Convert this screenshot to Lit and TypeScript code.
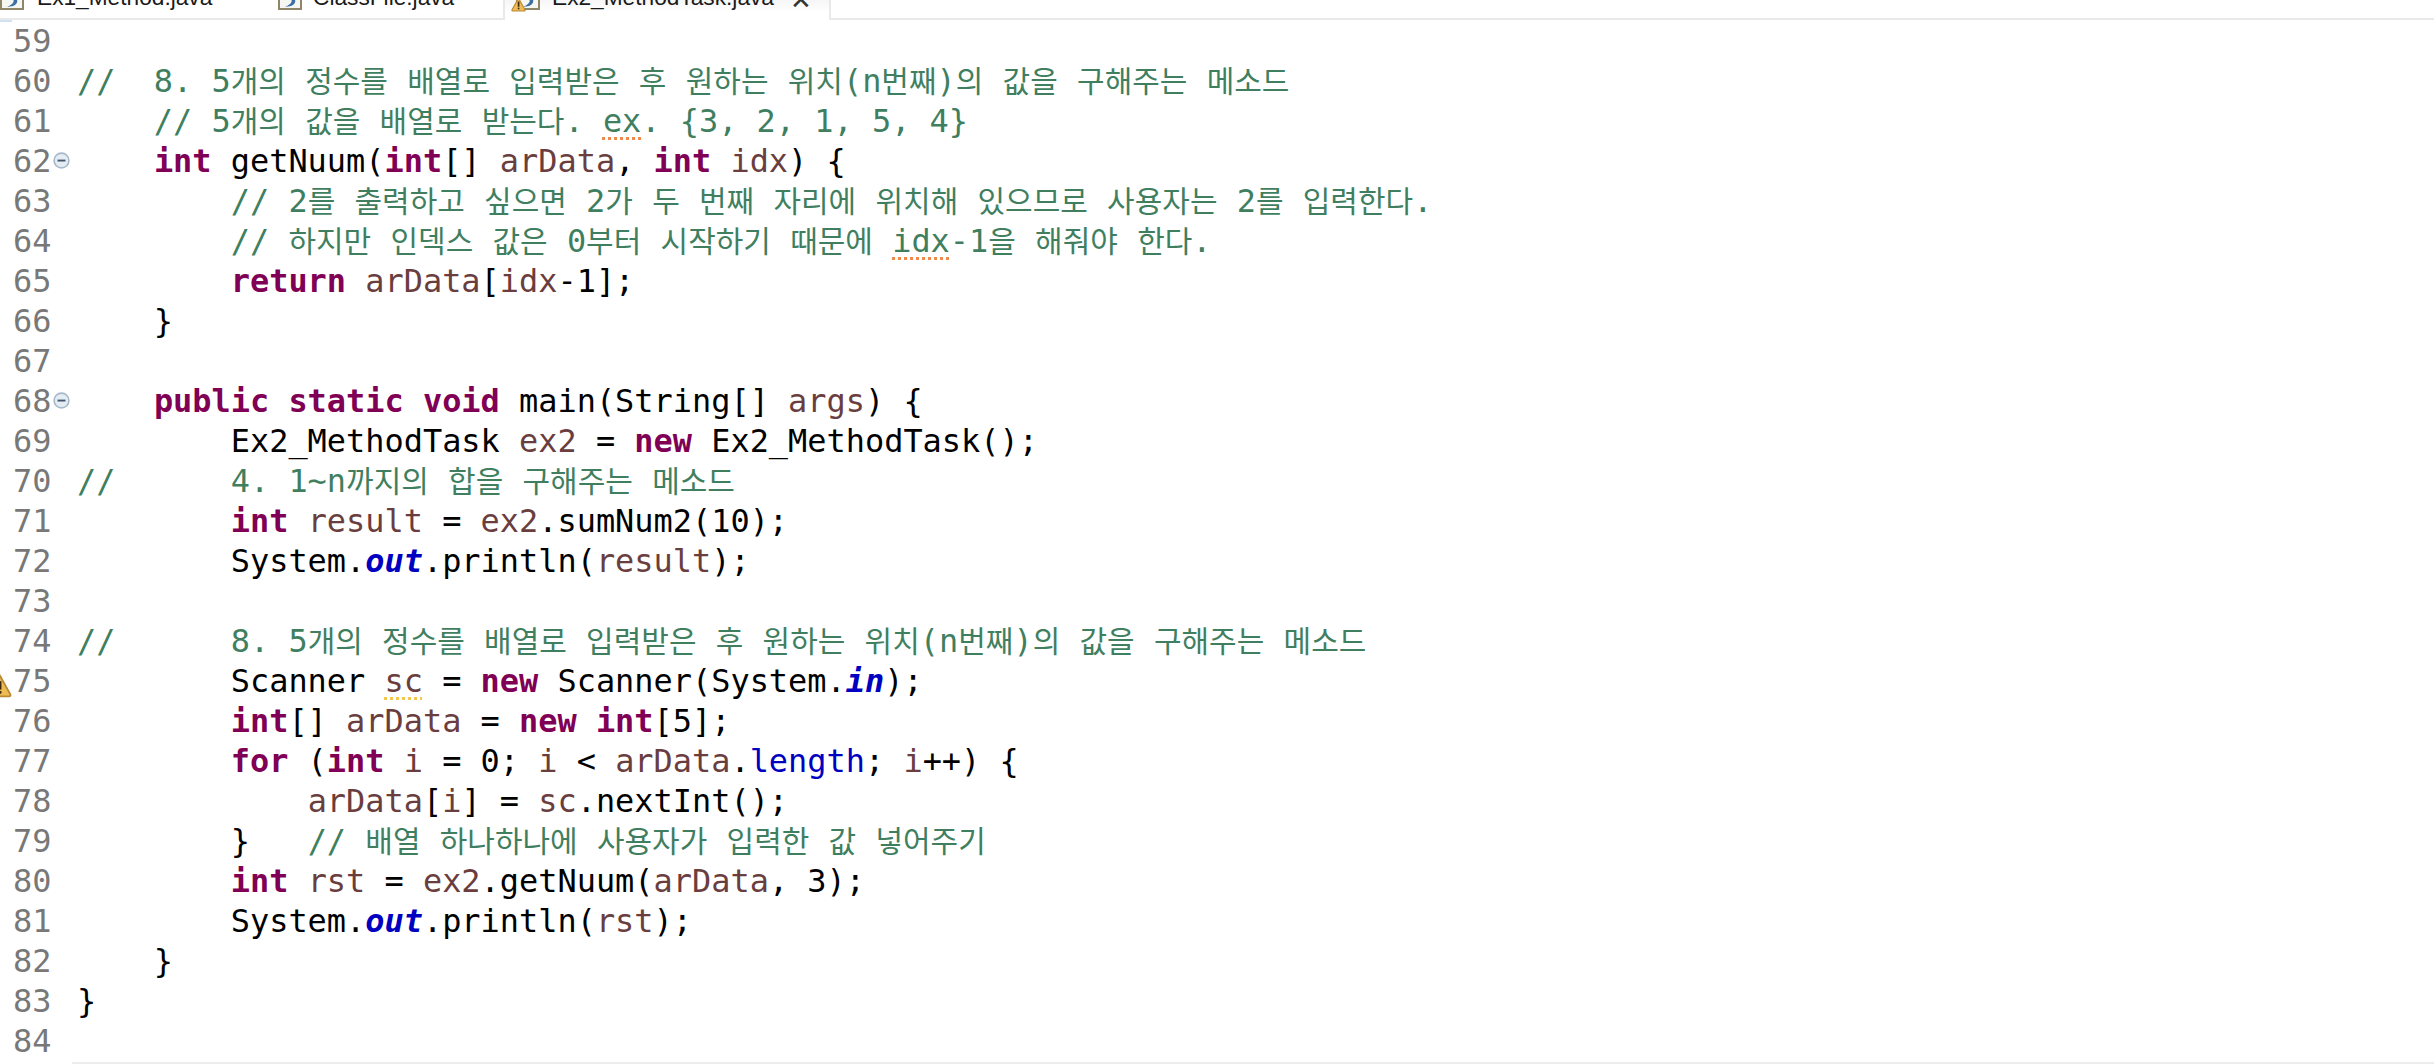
import { LitElement, html, css, svg } from "lit";
import { customElement } from "lit/decorators.js";

type Tok = [string, string?];
const C = "c", K = "k", V = "v", F = "f", L = "l", W = "w", S = "s";
const lines: { n: number; t: Tok[]; fold?: boolean; warn?: boolean }[] = [
  { n: 59, t: [] },
  { n: 60, t: [["//  8. 5개의 정수를 배열로 입력받은 후 원하는 위치(n번째)의 값을 구해주는 메소드", C]] },
  { n: 61, t: [["    // 5개의 값을 배열로 받는다. ", C], ["ex", S + " " + C], [". {3, 2, 1, 5, 4}", C]] },
  { n: 62, fold: true, t: [["    "], ["int", K], [" getNuum("], ["int", K], ["[] "], ["arData", V], [", "], ["int", K], [" "], ["idx", V], [") {"]] },
  { n: 63, t: [["        // 2를 출력하고 싶으면 2가 두 번째 자리에 위치해 있으므로 사용자는 2를 입력한다.", C]] },
  { n: 64, t: [["        // 하지만 인덱스 값은 0부터 시작하기 때문에 ", C], ["idx", S + " " + C], ["-1을 해줘야 한다.", C]] },
  { n: 65, t: [["        "], ["return", K], [" "], ["arData", V], ["["], ["idx", V], ["-1];"]] },
  { n: 66, t: [["    }"]] },
  { n: 67, t: [] },
  { n: 68, fold: true, t: [["    "], ["public", K], [" "], ["static", K], [" "], ["void", K], [" main(String[] "], ["args", V], [") {"]] },
  { n: 69, t: [["        Ex2_MethodTask "], ["ex2", V], [" = "], ["new", K], [" Ex2_MethodTask();"]] },
  { n: 70, t: [["//      4. 1~n까지의 합을 구해주는 메소드", C]] },
  { n: 71, t: [["        "], ["int", K], [" "], ["result", V], [" = "], ["ex2", V], [".sumNum2(10);"]] },
  { n: 72, t: [["        System."], ["out", F], [".println("], ["result", V], [");"]] },
  { n: 73, t: [] },
  { n: 74, t: [["//      8. 5개의 정수를 배열로 입력받은 후 원하는 위치(n번째)의 값을 구해주는 메소드", C]] },
  { n: 75, warn: true, t: [["        Scanner "], ["sc", V + " " + W], [" = "], ["new", K], [" Scanner(System."], ["in", F], [");"]] },
  { n: 76, t: [["        "], ["int", K], ["[] "], ["arData", V], [" = "], ["new", K], [" "], ["int", K], ["[5];"]] },
  { n: 77, t: [["        "], ["for", K], [" ("], ["int", K], [" "], ["i", V], [" = 0; "], ["i", V], [" < "], ["arData", V], ["."], ["length", L], ["; "], ["i", V], ["++) {"]] },
  { n: 78, t: [["            "], ["arData", V], ["["], ["i", V], ["] = "], ["sc", V], [".nextInt();"]] },
  { n: 79, t: [["        }   "], ["// 배열 하나하나에 사용자가 입력한 값 넣어주기", C]] },
  { n: 80, t: [["        "], ["int", K], [" "], ["rst", V], [" = "], ["ex2", V], [".getNuum("], ["arData", V], [", 3);"]] },
  { n: 81, t: [["        System."], ["out", F], [".println("], ["rst", V], [");"]] },
  { n: 82, t: [["    }"]] },
  { n: 83, t: [["}"]] },
  { n: 84, t: [] },
];

const fileIcon = svg`<svg width="25" height="10" viewBox="0 0 25 10"><rect x="1" y="-6" width="22" height="15" fill="#f6f6f2" stroke="#8f8668" stroke-width="2"/><path d="M9 -3 C16 -1 15 4 7 7 L13 6 C19 3 18 -1 14 -3 Z" fill="#3b6ea5"/></svg>`;
const warnIcon = svg`<svg viewBox="0 0 20 20"><path d="M10 1.5 L18.6 17 Q19.2 18.6 17.6 18.6 L2.4 18.6 Q0.8 18.6 1.4 17 Z" fill="#eebb55" stroke="#b98a35" stroke-width="1.5"/><rect x="9" y="6" width="2.2" height="7" fill="#3a2a10"/><rect x="9" y="14.2" width="2.2" height="2.2" fill="#3a2a10"/></svg>`;

const split = (s: string) =>
  s.split(/([\uAC00-\uD7A3]+)/).map((p, i) => (i % 2 ? html`<span class="h">${p}</span>` : p));

@customElement("app-root")
export class AppRoot extends LitElement {
  static styles = css`
    :host { display: block; width: 2434px; height: 1064px; background: #fff; overflow: hidden; position: relative; }
    .tabs { display: flex; height: 20px; box-sizing: border-box; border-bottom: 2px solid #e9e9e9; font: 22.7px/24px "Liberation Sans", Arial, sans-serif; color: #1a1a1a; }
    .tab { height: 18px; overflow: hidden; display: flex; align-items: flex-start; box-sizing: border-box; white-space: nowrap; flex: none; }
    .tab span { display: block; margin-top: -15px; }
    .tab svg { display: block; flex: none; }
    .t1 { width: 278px; gap: 12px; }
    .t2 { width: 225px; gap: 10px; }
    .t3 { width: 328px; height: 20px; margin-bottom: -2px; background: linear-gradient(#f6f6f6, #fff 60%); border-left: 2px solid #e9e9e9; border-right: 2px solid #e9e9e9; position: relative; padding-left: 11px; }
    .t3 .wi { position: absolute; left: 6px; top: -3px; width: 15px; height: 15px; }
    .t3 .lbl { margin-left: 11px; }
    .t3 .x { margin-left: 16px; font-size: 26px; color: #333; margin-top: -12px; }
    .blue { width: 12px; height: 2px; background: #cfe2f5; }
    .ed { margin-top: -1px; font: 31.93px/40px "DejaVu Sans Mono", "Noto Sans CJK KR", monospace; color: #000; }
    .row { display: flex; height: 40px; }
    .code { white-space: pre; }
    .h { font-family: "Noto Sans CJK KR", sans-serif; font-size: 30px; line-height: 1; }
    .gut { width: 77px; flex: none; position: relative; box-sizing: border-box; padding-left: 13px; color: #787878; }
    .fold { position: absolute; left: 53px; top: 11px; width: 17px; height: 17px; }
    .warn { position: absolute; left: -12px; top: 6px; width: 24px; height: 24px; }
    .c { color: #3f7f5f; }
    .k { color: #7f0055; font-weight: bold; }
    .v { color: #6a3e3e; }
    .f { color: #0000c0; font-weight: bold; font-style: italic; }
    .l { color: #0000c0; }
    .s { text-decoration: underline dotted #ee8a4c 3px; text-underline-offset: 5px; }
    .w { text-decoration: underline dotted #f0c850 3px; text-underline-offset: 5px; }
    .rule { height: 2px; margin-top: 1px; background: #ececec; margin-left: 72px; }
  `;

  render() {
    return html`
      <div class="tabs">
        <div class="tab t1">${fileIcon}<span>Ex1_Method.java</span></div>
        <div class="tab t2">${fileIcon}<span>ClassFile.java</span></div>
        <div class="tab t3">${fileIcon}<div class="wi">${warnIcon}</div><span class="lbl">Ex2_MethodTask.java</span><span class="x">✕</span></div>
      </div>
      <div class="blue"></div>
      <div class="ed">
        ${lines.map((l) => html`<div class="row">
          <div class="gut">${l.n}${l.fold
            ? html`<svg class="fold" viewBox="0 0 17 17"><circle cx="8.5" cy="8.5" r="7.4" fill="#e4ecf4" stroke="#a6b8ca" stroke-width="1.6"/><rect x="4.5" y="7.6" width="8" height="1.9" fill="#44566a"/></svg>`
            : ""}${l.warn ? html`<div class="warn">${warnIcon}</div>` : ""}</div>
          <div class="code">${l.t.map(([s, c]) => (c ? html`<span class=${c}>${split(s)}</span>` : s))}</div>
        </div>`)}
      </div>
      <div class="rule"></div>
    `;
  }
}
